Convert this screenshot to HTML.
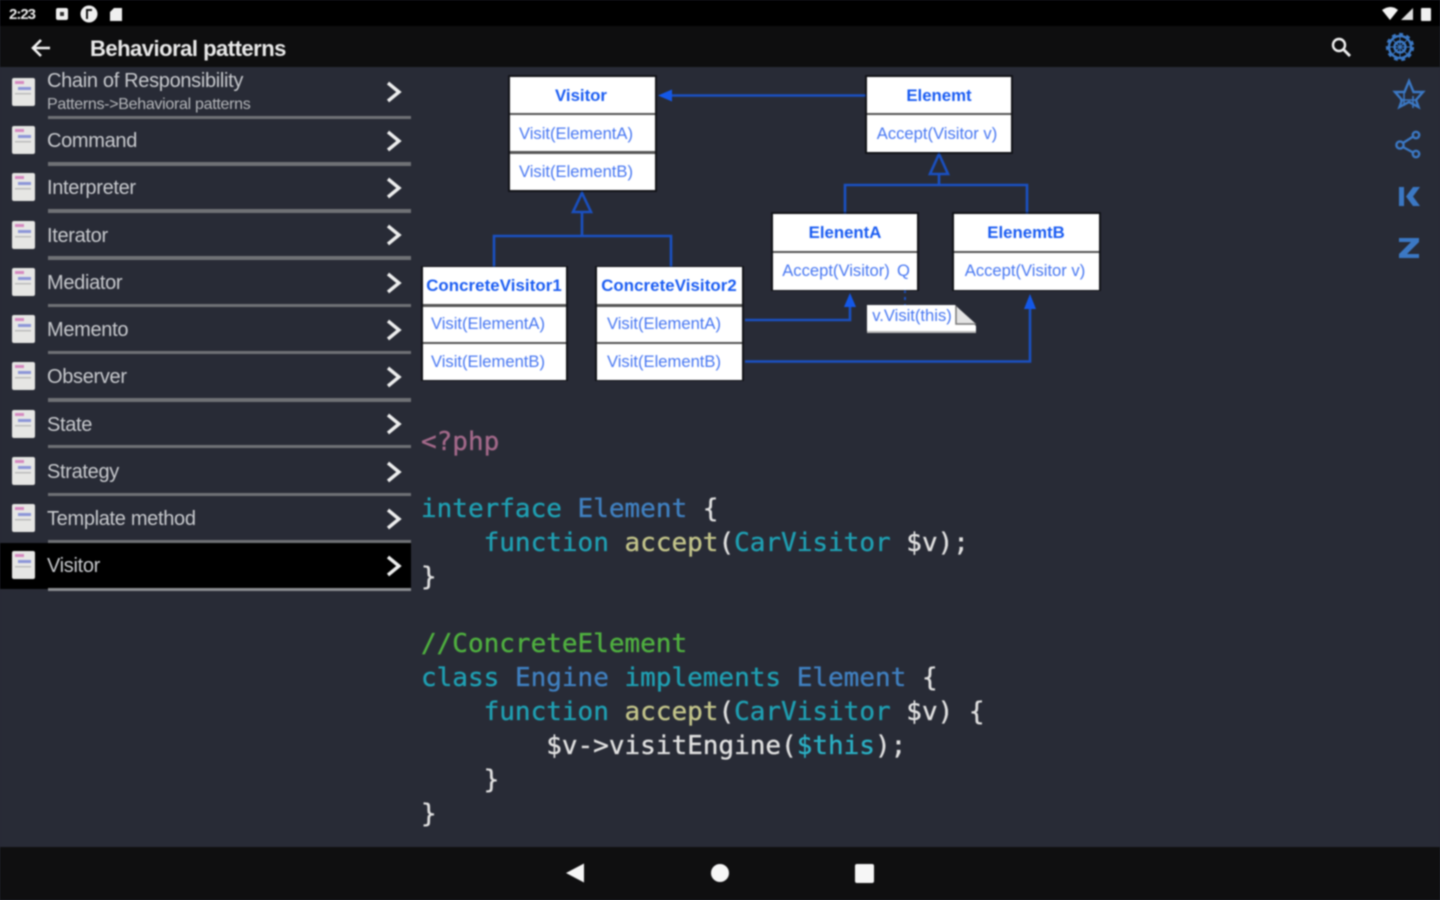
<!DOCTYPE html>
<html><head><meta charset="utf-8"><title>Behavioral patterns</title>
<style>
html,body{margin:0;padding:0;width:1440px;height:900px;overflow:hidden;background:#282b36}
svg{display:block;filter:blur(.75px)}
.s{font-family:"Liberation Sans",sans-serif}
.m{font-family:"DejaVu Sans Mono",monospace;font-size:26px;white-space:pre;stroke-width:.35px;paint-order:stroke}
.li{font-size:20px;fill:#c8cace;letter-spacing:-.32px}
.h{font-size:16.8px;font-weight:bold;fill:#1a5cf2;text-anchor:middle}
.t{font-size:16.6px;fill:#4777f2;text-anchor:middle}
</style></head><body>
<svg width="1440" height="900" viewBox="0 0 1440 900" xmlns="http://www.w3.org/2000/svg">
<defs>
<g id="ic"><rect x="-11" y="-14" width="23" height="28" rx="2" fill="#e6e6e4"/><rect x="-8" y="-11" width="9" height="3" fill="#d58ac0"/><rect x="-5" y="-5" width="13" height="3" fill="#8d96d8"/><rect x="-8" y="1" width="16" height="1.5" fill="#bbb"/></g>
<path id="ch" d="M-6 -9 L5 0 L-6 9" fill="none" stroke="#eceded" stroke-width="3.4"/>
</defs>
<rect width="1440" height="900" fill="#282b36"/>
<!-- status bar -->
<rect width="1440" height="26" fill="#000"/>
<rect y="26" width="1440" height="41" fill="#0e0e0f"/>
<text x="9" y="19" class="s" font-size="15" font-weight="bold" fill="#e8e8e8" letter-spacing="-1">2:23</text>
<rect x="56" y="8" width="12" height="12" rx="2" fill="#f0f0f0"/><rect x="60" y="12" width="4" height="4" fill="#333"/>
<circle cx="89" cy="14" r="8.5" fill="#f0f0f0"/><path d="M87 19V10h5" fill="none" stroke="#111" stroke-width="2"/>
<path d="M110 12l4-4h8v13h-12z" fill="#f0f0f0"/>
<path d="M1382 10q9-6 16 0l-8 10z" fill="#f4f4f4"/>
<path d="M1401 20l12-12v12z" fill="#ddd"/>
<rect x="1421" y="8" width="10" height="13" rx="1" fill="#f0f0f0"/>
<!-- toolbar -->
<path d="M50 48H33M41 40l-8 8 8 8" fill="none" stroke="#f2f2f2" stroke-width="2.6"/>
<text x="90" y="56" class="s" font-size="22" font-weight="bold" fill="#e9e9e9" letter-spacing="-.5">Behavioral patterns</text>
<circle cx="1339" cy="45" r="6" fill="none" stroke="#f0f0f0" stroke-width="2.4"/><path d="M1344 50l6 6" stroke="#f0f0f0" stroke-width="2.8"/>
<!-- gear -->
<g fill="none" stroke="#3b78c4" stroke-width="2.4"><circle cx="1400" cy="47" r="11"/><circle cx="1400" cy="47" r="5.5"/><circle cx="1400" cy="47" r="13" stroke-dasharray="4 3.5" stroke-width="2.2"/><path d="M1392 39l16 16M1408 39l-16 16M1400 36v22M1389 47h22" stroke-width="1"/></g>
<!-- right rail -->
<g fill="none" stroke="#3b78c4" stroke-width="2.4">
<path d="M1409 81l4.500 11h9.500l-7 8 2.500 7-9.500-5-9.500 5 2.500-7-7-8h9.500z" stroke-width="2.4"/><path d="M1404 92v14M1413 96v12M1400 100h17" stroke-width="1.6"/>
<circle cx="1400" cy="145" r="3.6"/><circle cx="1416" cy="135" r="3.2"/><circle cx="1416" cy="154" r="3.2"/><path d="M1403 143l11-7M1403 147l11 6"/>
</g>
<path d="M1399 187h5v19h-5zM1406 196.500l7-9.500h7l-7 9.500 7 9.500h-7z" fill="#3b78c4"/>
<path d="M1399 238h20v4l-12 12h12v4h-20v-4l12-12h-12z" fill="#3b78c4"/>
<!-- sidebar -->
<rect x="0" y="543" width="411" height="46" fill="#000"/>
<g fill="#6f7175">
<rect x="48" y="116" width="363" height="3"/><rect x="48" y="162" width="363" height="4"/><rect x="48" y="209" width="363" height="4"/><rect x="48" y="256" width="363" height="4"/><rect x="48" y="304" width="363" height="3"/><rect x="48" y="351" width="363" height="3"/><rect x="48" y="398" width="363" height="4"/><rect x="48" y="445" width="363" height="3"/><rect x="48" y="493" width="363" height="3"/><rect x="48" y="540" width="363" height="3"/><rect x="48" y="588" width="363" height="3" fill="#8a8c90"/>
</g>
<g class="s li">
<text x="47" y="87">Chain of Responsibility</text>
<text x="47" y="147">Command</text>
<text x="47" y="194">Interpreter</text>
<text x="47" y="242">Iterator</text>
<text x="47" y="289">Mediator</text>
<text x="47" y="336">Memento</text>
<text x="47" y="383">Observer</text>
<text x="47" y="431">State</text>
<text x="47" y="478">Strategy</text>
<text x="47" y="525">Template method</text>
<text x="47" y="572">Visitor</text>
</g>
<text x="47" y="109" class="s" font-size="16" fill="#b4b6ba" letter-spacing="-.3">Patterns-&gt;Behavioral patterns</text>
<use href="#ic" x="23" y="92"/><use href="#ic" x="23" y="140"/><use href="#ic" x="23" y="187"/><use href="#ic" x="23" y="235"/><use href="#ic" x="23" y="282"/><use href="#ic" x="23" y="329"/><use href="#ic" x="23" y="376"/><use href="#ic" x="23" y="424"/><use href="#ic" x="23" y="471"/><use href="#ic" x="23" y="518"/><use href="#ic" x="23" y="565"/>
<use href="#ch" x="394" y="92"/><use href="#ch" x="394" y="141"/><use href="#ch" x="394" y="188"/><use href="#ch" x="394" y="235"/><use href="#ch" x="394" y="283"/><use href="#ch" x="394" y="330"/><use href="#ch" x="394" y="377"/><use href="#ch" x="394" y="424"/><use href="#ch" x="394" y="472"/><use href="#ch" x="394" y="519"/><use href="#ch" x="394" y="566"/>
<!-- diagram connectors -->
<g fill="none" stroke="#1a50c0" stroke-width="2.6">
<path d="M672 95.500H866"/>
<path d="M494 267V236H671V267M582 236V212"/>
<path d="M845 214V185H1027V214M939 185V175"/>
<path d="M745 320H850V305"/>
<path d="M745 361.500H1030V308"/>
<path d="M582 193l9 19h-18z"/>
<path d="M939 154l9 20h-18z"/>
<path d="M905 283v22" stroke-dasharray="3 4" stroke-width="2"/>
</g>
<path d="M658 95.500l14-6v12z" fill="#1458e8"/>
<path d="M850 293l6 14h-12z" fill="#1458e8"/>
<path d="M1030 294l6 15h-12z" fill="#1458e8"/>
<!-- boxes -->
<g fill="#000" opacity=".55">
<rect x="508" y="75" width="149" height="117"/><rect x="865" y="75" width="148" height="79"/><rect x="771" y="212" width="148" height="79"/><rect x="952" y="212" width="149" height="79"/><rect x="421" y="266" width="147" height="115"/><rect x="595" y="266" width="149" height="115"/>
</g>
<g fill="#fff">
<rect x="510" y="77" width="145" height="113"/><rect x="867" y="77" width="144" height="75"/><rect x="773" y="214" width="144" height="76"/><rect x="954" y="214" width="145" height="76"/><rect x="423" y="267" width="143" height="113"/><rect x="597" y="267" width="145" height="113"/>
<path d="M867 305h88l21 21v7H867z"/>
</g>
<path d="M956 306v18h20" fill="#e4e4e4" stroke="#777" stroke-width="1.500"/>
<path d="M867 332h109" stroke="#bbb" stroke-width="2"/>
<g fill="#555">
<rect x="510" y="113" width="145" height="2"/><rect x="510" y="151" width="145" height="3"/><rect x="867" y="113" width="144" height="2"/><rect x="773" y="251" width="144" height="2"/><rect x="954" y="251" width="145" height="2"/><rect x="423" y="304" width="143" height="3"/><rect x="423" y="342" width="143" height="2"/><rect x="597" y="304" width="145" height="3"/><rect x="597" y="342" width="145" height="2"/>
</g>
<g class="s h">
<text x="581" y="101">Visitor</text><text x="939" y="101">Elenemt</text><text x="845" y="238">ElenentA</text><text x="1026" y="238">ElenemtB</text><text x="494" y="291" font-size="16.8" letter-spacing=".1">ConcreteVisitor1</text><text x="669" y="291" letter-spacing=".1">ConcreteVisitor2</text>
</g>
<g class="s t">
<text x="576" y="139">Visit(ElementA)</text><text x="576" y="177">Visit(ElementB)</text>
<text x="937" y="139">Accept(Visitor v)</text>
<text x="836" y="276">Accept(Visitor)</text><text x="903.500" y="276">Q</text><text x="1025" y="276">Accept(Visitor v)</text>
<text x="488" y="329">Visit(ElementA)</text><text x="488" y="367">Visit(ElementB)</text>
<text x="664" y="329">Visit(ElementA)</text><text x="664" y="367">Visit(ElementB)</text>
<text x="912" y="321">v.Visit(this)</text>
</g>
<!-- code -->
<g class="m">
<text x="421" y="450" fill="#a3698a" stroke="#a3698a">&lt;?php</text>
<text x="421" y="517"><tspan fill="#1f9fb2" stroke="#1f9fb2">interface</tspan> <tspan fill="#4080c0" stroke="#4080c0">Element</tspan> <tspan fill="#e0e0e0" stroke="#e0e0e0">{</tspan></text>
<text x="421" y="551" xml:space="preserve">    <tspan fill="#1f9fb2" stroke="#1f9fb2">function</tspan> <tspan fill="#c3c48a" stroke="#c3c48a">accept</tspan><tspan fill="#e0e0e0" stroke="#e0e0e0">(</tspan><tspan fill="#1f9fb2" stroke="#1f9fb2">CarVisitor</tspan> <tspan fill="#e0e0e0" stroke="#e0e0e0">$v);</tspan></text>
<text x="421" y="585" fill="#e0e0e0" stroke="#e0e0e0">}</text>
<text x="421" y="652" fill="#4fb03f" stroke="#4fb03f">//ConcreteElement</text>
<text x="421" y="686"><tspan fill="#1f9fb2" stroke="#1f9fb2">class</tspan> <tspan fill="#4080c0" stroke="#4080c0">Engine</tspan> <tspan fill="#1f9fb2" stroke="#1f9fb2">implements</tspan> <tspan fill="#4080c0" stroke="#4080c0">Element</tspan> <tspan fill="#e0e0e0" stroke="#e0e0e0">{</tspan></text>
<text x="421" y="720" xml:space="preserve">    <tspan fill="#1f9fb2" stroke="#1f9fb2">function</tspan> <tspan fill="#c3c48a" stroke="#c3c48a">accept</tspan><tspan fill="#e0e0e0" stroke="#e0e0e0">(</tspan><tspan fill="#1f9fb2" stroke="#1f9fb2">CarVisitor</tspan> <tspan fill="#e0e0e0" stroke="#e0e0e0">$v) {</tspan></text>
<text x="421" y="754" xml:space="preserve" fill="#e0e0e0" stroke="#e0e0e0">        $v-&gt;visitEngine(<tspan fill="#2ab0c4" stroke="#2ab0c4">$this</tspan>);</text>
<text x="421" y="788" xml:space="preserve" fill="#e0e0e0" stroke="#e0e0e0">    }</text>
<text x="421" y="822" fill="#e0e0e0" stroke="#e0e0e0">}</text>
</g>
<!-- nav bar -->
<rect y="847" width="1440" height="53" fill="#0f0f10"/>
<path d="M566 873l18-9.500v19z" fill="#f6f6f6"/>
<circle cx="720" cy="873" r="9" fill="#f6f6f6"/>
<rect x="855" y="864" width="19" height="19" rx="2" fill="#f6f6f6"/>
</svg>
</body></html>
